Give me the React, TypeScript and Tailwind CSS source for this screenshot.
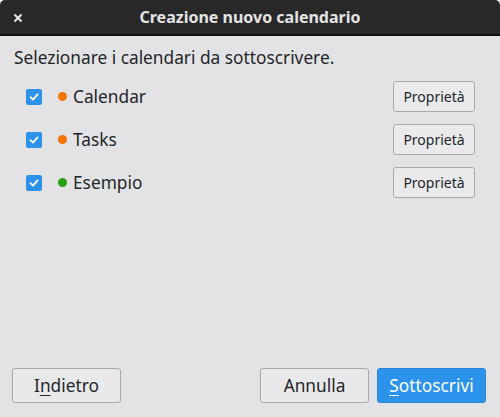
import React from "react";

const font = { fontFamily: '"Noto Sans", "Open Sans", sans-serif' };

function Check() {
  return (
    <div className="w-[16px] h-[16px] rounded-[2px] bg-[#2d93ea] flex items-center justify-center">
      <svg width="12" height="12" viewBox="0 0 12 12">
        <path d="M2.5 6.2 L5 8.6 L9.6 3.4" stroke="white" strokeWidth="1.8" fill="none" strokeLinecap="round" strokeLinejoin="round" />
      </svg>
    </div>
  );
}

function Row({ name, color }: { name: string; color: string }) {
  return (
    <div className="flex items-center h-[43px]">
      <div className="ml-[26px]"><Check /></div>
      <div className={`ml-[16px] w-[9px] h-[9px] rounded-full ${color}`} />
      <span className="ml-[6px] text-[17.3px] text-[#232629]">{name}</span>
      <button className="ml-auto mr-[25px] w-[82px] h-[31px] rounded-[3px] border border-[#a9a9ac] bg-[#eaeaec] text-[14px] text-[#232629]">
        Proprietà
      </button>
    </div>
  );
}

export default function App() {
  return (
    <div className="w-[500px] h-[417px] bg-white" style={font}>
      <div className="w-full h-full flex flex-col bg-[#e3e3e5] rounded-t-[5px] overflow-hidden">
        <div className="h-[36px] bg-[#282828] border-b-[2px] border-[#0d0d0d] flex items-center relative">
          <svg className="absolute left-[13px] top-[13px]" width="10" height="10" viewBox="0 0 10 10">
            <path d="M1.5 1.5 L8.5 8.5 M8.5 1.5 L1.5 8.5" stroke="#e6e6e6" strokeWidth="2" />
          </svg>
          <div className="flex-1 text-center text-[#e4e4e4] text-[16px] font-bold">Creazione nuovo calendario</div>
        </div>
        <div className="px-[14px] pt-[10px] text-[17.3px] text-[#232629] leading-[24px]">
          Selezionare i calendari da sottoscrivere.
        </div>
        <div className="mt-[5px] flex flex-col">
          <Row name="Calendar" color="bg-[#f67400]" />
          <Row name="Tasks" color="bg-[#f67400]" />
          <Row name="Esempio" color="bg-[#27a014]" />
        </div>
        <div className="flex-1" />
        <div className="flex items-center px-[12px] pb-[14px] gap-[8px]">
          <button className="w-[109px] h-[35px] rounded-[3px] border border-[#a9a9ac] bg-[#e9e9eb] text-[17.3px] text-[#232629]">
            I<span className="underline underline-offset-[3px]">n</span>dietro
          </button>
          <div className="flex-1" />
          <button className="w-[109px] h-[35px] rounded-[3px] border border-[#a9a9ac] bg-[#e9e9eb] text-[17.3px] text-[#232629]">
            Annulla
          </button>
          <button className="mr-[2px] w-[109px] h-[35px] rounded-[3px] border border-[#2a88d6] bg-[#2b93eb] text-[17.3px] text-white">
            <span className="underline underline-offset-[3px]">S</span>ottoscrivi
          </button>
        </div>
      </div>
    </div>
  );
}
